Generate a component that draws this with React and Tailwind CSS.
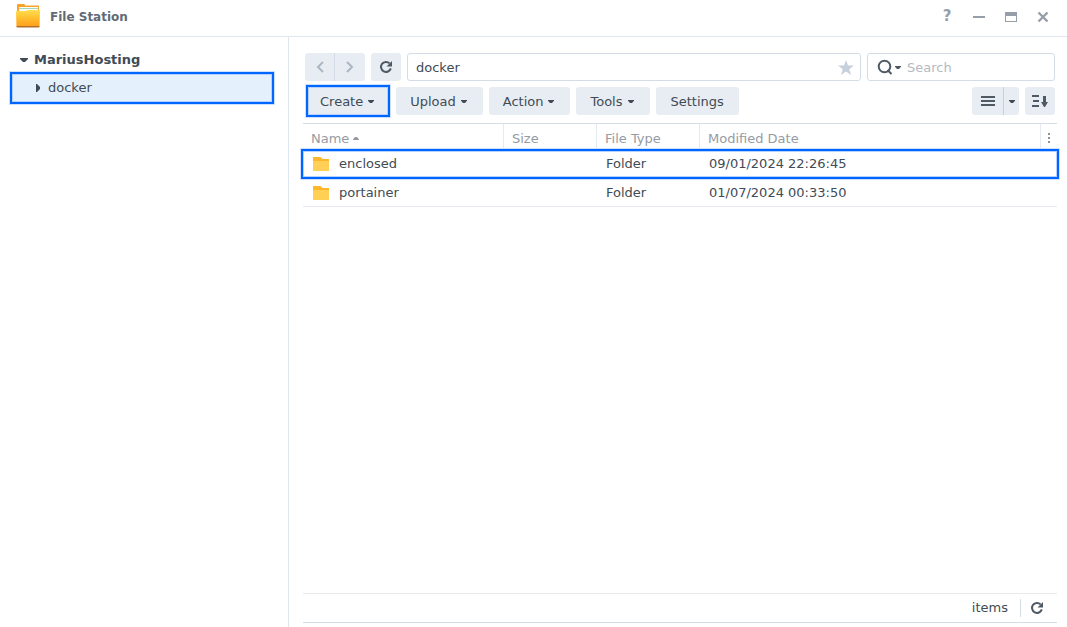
import clsx from 'clsx'

const files = [
  { name: 'enclosed', type: 'Folder', date: '09/01/2024 22:26:45', highlighted: true },
  { name: 'portainer', type: 'Folder', date: '01/07/2024 00:33:50' },
]

const menus = [
  { label: 'Create', arrow: true, highlighted: true },
  { label: 'Upload', arrow: true },
  { label: 'Action', arrow: true },
  { label: 'Tools', arrow: true },
  { label: 'Settings' },
]

const grayButton = 'h-7 bg-[#e8edf4] text-[#414b55] hover:bg-[#dde4ed]'

function Caret({ className }) {
  return (
    <svg width="6" height="3" viewBox="0 0 6 3" fill="currentColor" className={className} aria-hidden="true">
      <path d="M0 0h6v.8L4 3H2L0 .8z" />
    </svg>
  )
}

function AppIcon() {
  return (
    <svg width="24" height="25" viewBox="0 0 24 25" aria-hidden="true">
      <defs>
        <linearGradient id="folderFront" x1="0" y1="0" x2="0" y2="1">
          <stop offset="0" stopColor="#ffdf4f" />
          <stop offset="0.5" stopColor="#ffbd2e" />
          <stop offset="1" stopColor="#ff9d1c" />
        </linearGradient>
      </defs>
      <path d="M1 1q0-1 1-1h6q1 0 1 1.500h13q1 0 1 1V10H1z" fill="#f7a428" />
      <path d="M3 3h19v7H3z" fill="#fffdf2" />
      <path d="M3 4h19v1H3z" fill="#9fd8c0" />
      <path d="M0 8q0-1 1-1h9l2-1h11q1 0 1 1l-.5 16H.5z" fill="url(#folderFront)" />
      <path d="M.5 22h23q0 1.500-1 1.500h-21q-1 0-1-1.500z" fill="#b0702c" />
    </svg>
  )
}

function FolderIcon() {
  return (
    <svg width="16" height="14" viewBox="0 0 16 14" aria-hidden="true">
      <path d="M0 0h7.500l2 2H16v3H0z" fill="#fdb72b" />
      <path d="M0 4h16v10H0z" fill="#ffd055" />
    </svg>
  )
}

function RefreshIcon() {
  return (
    <svg width="14" height="14" viewBox="0 0 14 14" aria-hidden="true">
      <path d="M10.6 3.4A5 5 0 1 0 11.8 8.4" fill="none" stroke="#505a64" strokeWidth="2" />
      <path d="M13 1v5.500H7.500z" fill="#505a64" />
    </svg>
  )
}

// Blue marker frame drawn over its parent
function Frame({ className }) {
  return (
    <span
      className={clsx(
        'pointer-events-none absolute border-2 border-[#0066ff] shadow-[0_0_0_1px_#cce0ff,inset_0_0_0_1px_#b3d1ff]',
        className
      )}
    />
  )
}

function TitleBar() {
  return (
    <header className="flex h-[37px] shrink-0 items-center border-b border-[#dfe6ee] pr-4 pb-[3px] pl-4">
      <AppIcon />
      <h1 className="ml-[10px] text-[12px] font-bold text-[#5f6a76]">File Station</h1>
      <div className="ml-auto flex items-center gap-4 text-[#969ea9]">
        <button aria-label="Help" className="flex size-4 items-center justify-center text-[15px] font-bold">?</button>
        <button aria-label="Minimize" className="flex size-4 items-center justify-center">
          <svg width="12" height="12" viewBox="0 0 12 12"><path d="M0 5h12v2H0z" fill="currentColor" /></svg>
        </button>
        <button aria-label="Maximize" className="flex size-4 items-center justify-center">
          <svg width="12" height="10" viewBox="0 0 12 10"><path fillRule="evenodd" d="M0 0h12v10H0zM1 4v5h10V4z" fill="currentColor" /></svg>
        </button>
        <button aria-label="Close" className="flex size-4 items-center justify-center">
          <svg width="12" height="12" viewBox="0 0 12 12"><path d="M1.500 1.500l9 9M10.500 1.500l-9 9" stroke="currentColor" strokeWidth="2.400" /></svg>
        </button>
      </div>
    </header>
  )
}

function Sidebar() {
  return (
    <nav className="w-[289px] shrink-0 border-r border-[#dfe6ee] px-3 pt-[9px]">
      <button className="flex h-7 w-full items-center gap-[6px] pl-2 text-[13px] font-bold text-[#414b55]">
        <svg width="8" height="4" viewBox="0 0 8 4"><path d="M0 0h8v1L5 4H3L0 1z" fill="currentColor" /></svg>
        MariusHosting
      </button>
      <a
        href="#docker"
        className="relative mr-1 flex h-7 items-center gap-2 bg-[#e4f0fc] pl-6 text-[13px] text-[#414b55]"
      >
        <svg width="4" height="8" viewBox="0 0 4 8"><path d="M0 0h1l3 3v2L1 8H0z" fill="currentColor" /></svg>
        <span>docker</span>
        <Frame className="-inset-0.5" />
      </a>
    </nav>
  )
}

function AddressBar() {
  return (
    <div className="flex gap-[6px] px-0.5">
      <div className="flex">
        <button aria-label="Back" className={clsx(grayButton, 'flex w-[30px] items-center justify-center rounded-l-[3px] border-r border-[#d3dce6]')}>
          <svg width="8" height="12" viewBox="0 0 8 12"><path d="M7 1L2 6l5 5" fill="none" stroke="#aeb6c0" strokeWidth="2" /></svg>
        </button>
        <button aria-label="Forward" className={clsx(grayButton, 'flex w-[30px] items-center justify-center rounded-r-[3px]')}>
          <svg width="8" height="12" viewBox="0 0 8 12"><path d="M1 1l5 5-5 5" fill="none" stroke="#aeb6c0" strokeWidth="2" /></svg>
        </button>
      </div>
      <button aria-label="Refresh" className={clsx(grayButton, 'flex w-[30px] items-center justify-center rounded-[3px]')}>
        <RefreshIcon />
      </button>
      <div className="flex h-7 flex-1 items-center rounded-[3px] border border-[#d2dde8] pr-[6px]">
        <input aria-label="Path" defaultValue="docker" className="h-full min-w-0 flex-1 pl-2 text-[13px] text-[#414b55] outline-none" />
        <button aria-label="Add to favorites">
          <svg width="16" height="15" viewBox="0 0 16 15"><path d="M8 0l2 5.400 6 .2-4.700 3.600L13 15l-5-3.400L3 15l1.700-5.800L0 5.600l6-.2z" fill="#c6d0dc" /></svg>
        </button>
      </div>
      <div className="flex h-7 w-[188px] items-center rounded-[3px] border border-[#d2dde8] pl-[9px] text-[#505a64]">
        <button aria-label="Search options" className="flex items-center gap-[2px]">
          <svg width="16" height="16" viewBox="0 0 16 16">
            <circle cx="7.500" cy="7.500" r="5.800" fill="none" stroke="currentColor" strokeWidth="2" />
            <path d="M10.500 11l4 4" stroke="currentColor" strokeWidth="2" />
          </svg>
          <Caret />
        </button>
        <input aria-label="Search" placeholder="Search" className="h-full min-w-0 flex-1 pl-[6px] text-[13px] outline-none placeholder:text-[#b4bac2]" />
      </div>
    </div>
  )
}

function Toolbar() {
  return (
    <div className="mt-[6px] flex gap-[6px] pr-0.5 pl-[3px]">
      {menus.map(menu => (
        <button
          key={menu.label}
          className={clsx(
            grayButton,
            'relative flex items-center gap-[5px] pt-px text-[13px]',
            menu.arrow ? 'pr-4 pl-[14px]' : 'px-[15px]',
            !menu.highlighted && 'rounded-[3px]'
          )}
        >
          {menu.label}
          {menu.arrow && <Caret />}
          {menu.highlighted && <Frame className="inset-x-0 -inset-y-0.5" />}
        </button>
      ))}
      <div className="ml-auto flex">
        <button aria-label="List view" className={clsx(grayButton, 'flex w-8 items-center justify-center rounded-l-[3px] border-r border-[#c5ced9]')}>
          <svg width="14" height="10" viewBox="0 0 14 10"><path d="M0 0h14v2H0zM0 4h14v2H0zM0 8h14v2H0z" fill="#505a64" /></svg>
        </button>
        <button aria-label="View options" className={clsx(grayButton, 'flex w-[15px] items-center justify-center rounded-r-[3px]')}>
          <Caret />
        </button>
      </div>
      <button aria-label="Sort" className={clsx(grayButton, 'flex w-[30px] items-center justify-center rounded-[3px]')}>
        <svg width="16" height="12" viewBox="0 0 16 12">
          <path d="M0 0h7v2H0zM1 5h6v2H1zM0 10h7v2H0z" fill="#505a64" />
          <path d="M11 1h3v6h2l-3 5h-1L9 7h2z" fill="#505a64" />
        </svg>
      </button>
    </div>
  )
}

function FileTable() {
  const th = 'h-[25px] border-r border-[#e3eaf2] pt-1 pl-2 text-left font-normal'
  return (
    <table className="mt-2 w-full table-fixed border-separate border-spacing-0 border-t border-[#d2dde8] text-[13px]">
      <thead className="text-[#969ba3]">
        <tr>
          <th className={clsx(th, 'w-[201px]')}>
            <button className="flex items-center gap-1">
              Name <Caret className="rotate-180" />
            </button>
          </th>
          <th className={clsx(th, 'w-[93px]')}>Size</th>
          <th className={clsx(th, 'w-[103px]')}>File Type</th>
          <th className={th}>Modified Date</th>
          <th className="w-[16px] pt-[3px]">
            <button aria-label="Choose columns" className="mx-auto block">
              <svg width="2" height="10" viewBox="0 0 2 10"><path d="M0 0h2v2H0zM0 4h2v2H0zM0 8h2v2H0z" fill="#8a929c" /></svg>
            </button>
          </th>
        </tr>
      </thead>
      <tbody className="text-[#414b55]">
        {files.map(file => (
          <tr key={file.name} className="relative *:h-[29px] *:border-b *:border-[#e6eaee] *:pt-px">
            <td className="pl-[10px]">
              <span className="flex items-center gap-[10px]">
                <FolderIcon />
                {file.name}
              </span>
              {file.highlighted && <Frame className="-inset-x-0.5 top-0 -bottom-px" />}
            </td>
            <td />
            <td className="pl-[9px]">{file.type}</td>
            <td className="pl-[9px]">{file.date}</td>
            <td />
          </tr>
        ))}
      </tbody>
    </table>
  )
}

function StatusBar() {
  return (
    <footer className="mt-auto mb-1 flex h-[30px] items-center justify-end border-t border-b border-t-[#e8eaec] border-b-[#d2dde8] pr-[13px] text-[13px] text-[#414b55]">
      <span className="mr-3">items</span>
      <button aria-label="Reload list" className="flex h-[18px] items-center border-l border-[#d2dde8] pl-[9px]">
        <RefreshIcon />
      </button>
    </footer>
  )
}

export default function App() {
  return (
    <div className="flex min-h-screen flex-col bg-white font-['DejaVu_Sans',sans-serif]">
      <TitleBar />
      <div className="flex flex-1">
        <Sidebar />
        <main className="flex min-w-0 flex-1 flex-col pt-4 pr-[10px] pl-[14px]">
          <AddressBar />
          <Toolbar />
          <FileTable />
          <StatusBar />
        </main>
      </div>
    </div>
  )
}
